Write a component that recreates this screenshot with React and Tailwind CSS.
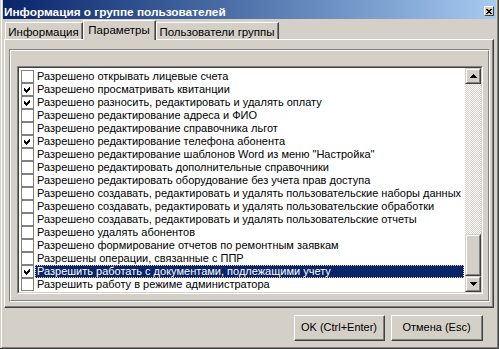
import React from "react";

const items = [
  ["Разрешено открывать лицевые счета", false],
  ["Разрешено просматривать квитанции", true],
  ["Разрешено разносить, редактировать и удалять оплату", true],
  ["Разрешено редактирование адреса и ФИО", false],
  ["Разрешено редактирование справочника льгот", false],
  ["Разрешено редактирование телефона абонента", true],
  ["Разрешено редактирование шаблонов Word из меню \"Настройка\"", false],
  ["Разрешено редактировать дополнительные справочники", false],
  ["Разрешено редактировать оборудование без учета прав доступа", false],
  ["Разрешено создавать, редактировать и удалять пользовательские наборы данных", false],
  ["Разрешено создавать, редактировать и удалять пользовательские обработки", false],
  ["Разрешено создавать, редактировать и удалять пользовательские отчеты", false],
  ["Разрешено удалять абонентов", false],
  ["Разрешено формирование отчетов по ремонтным заявкам", false],
  ["Разрешены операции, связанные с ППР", false],
  ["Разрешить работать с документами, подлежащими учету", true],
  ["Разрешить работу в режиме администратора", false],
];

const SELECTED = 15;

const Check = ({ on }) => (
  <span className="w-[13px] h-[13px] shrink-0 border border-[#808080] bg-white flex items-center justify-center">
    {on && (
      <svg width="7" height="7" viewBox="0 0 7 7" shapeRendering="crispEdges">
        <path d="M0 2L2 4L6 0V3L2 7L0 5Z" fill="#000" />
      </svg>
    )}
  </span>
);

// classic 3d scroll button / thumb
const Raised = ({ className = "", children }) => (
  <div className={`border-t border-l border-[#d4d0c8] border-r-[#404040] border-b-[#404040] border-r border-b ${className}`}>
    <div className="w-full h-full border-t border-l border-white border-r border-b border-r-[#808080] border-b-[#808080] bg-[#d4d0c8] flex items-center justify-center">
      {children}
    </div>
  </div>
);

const Arrow = ({ down }) => (
  <svg width="7" height="4" viewBox="0 0 7 4" shapeRendering="crispEdges">
    <polygon points={down ? "0,0 7,0 3.5,4" : "3.5,0 7,4 0,4"} fill="#000" />
  </svg>
);

const Button = ({ w, children }) => (
  <div className={`${w} h-[26px] border-t border-l border-white border-r border-b border-r-[#404040] border-b-[#404040]`}>
    <div className="w-full h-full border-r border-b border-[#808080] border-t-0 border-l-0 flex items-center justify-center text-[11px] text-black">
      {children}
    </div>
  </div>
);

const Tab = ({ w, active, children }) => (
  <div
    className={`${w} ${active ? "h-[20px] -mb-[1px] relative z-10" : "h-[17px]"} border-t border-l border-white border-r border-r-[#404040] bg-[#d4d0c8]`}
  >
    <div className="h-full border-r border-[#808080] border-t-0 border-l-0 border-b-0 flex justify-center pt-[4px] text-[11.5px] leading-[11px] text-black">
      {children}
    </div>
  </div>
);

export default function App() {
  return (
    <div className="w-[499px] h-[349px] bg-[#d4d0c8] pl-[1px] border-r border-b border-[#404040] font-['Liberation_Sans',Arial,sans-serif]">
      <div className="h-full border-l border-white border-r border-b border-r-[#808080] border-b-[#808080] px-[1px] flex flex-col">
        {/* title bar */}
        <div className="h-[19px] shrink-0 flex bg-gradient-to-r from-[#0a246a] to-[#a6caf0]">
          <span className="pl-[1px] mt-[6px] text-[11.8px] leading-[12px] font-bold text-white whitespace-nowrap">
            Информация о группе пользователей
          </span>
          <div className="ml-auto mr-[2px] mt-[6px] w-[10px] h-[10px] border-t border-l border-white border-r border-b border-r-[#404040] border-b-[#404040] bg-[#d4d0c8] flex items-center justify-center">
            <svg width="6" height="5" viewBox="0 0 6 5" shapeRendering="crispEdges">
              <path d="M0 0L6 5M6 0L0 5" stroke="#000" strokeWidth="1.2" />
            </svg>
          </div>
        </div>

        {/* tabs */}
        <div className="mt-[1px] h-[19px] shrink-0 flex items-end pl-[2px]">
          <Tab w="w-[78px]">Информация</Tab>
          <Tab w="w-[73px]" active>Параметры</Tab>
          <Tab w="w-[123px]">Пользователи группы</Tab>
        </div>

        {/* tab page */}
        <div className="ml-[1px] mr-[2px] h-[269px] shrink-0 border-t border-l border-white border-r border-b border-r-[#404040] border-b-[#404040]">
          <div className="h-full border-r border-b border-[#808080] border-t-0 border-l-0 pt-[9px] pl-[4px] pr-[2px] pb-[4px]">
            {/* etched frame */}
            <div className="h-[253px] border-t border-l border-[#808080] border-r border-b border-r-white border-b-white">
              <div className="h-full border-t border-l border-white border-r border-b border-r-[#808080] border-b-[#808080] pt-[15px] pl-[6px] pr-[5px]">
                {/* list box */}
                <div className="h-[228px] border-t border-l border-[#808080] border-r border-b border-r-white border-b-white">
                  <div className="h-full border-t border-l border-[#404040] border-r border-b border-r-[#d4d0c8] border-b-[#d4d0c8] flex bg-white">
                    <div className="flex-1 min-w-0 pt-[2px] overflow-hidden">
                      {items.map(([label, on], i) => (
                        <div key={i} className="h-[13px] flex pl-[2px] pr-[1px]">
                          <Check on={on} />
                          <div
                            className={`ml-[1px] flex-1 min-w-0 h-[13px] pl-[1px] border text-[11px] leading-[11px] whitespace-nowrap overflow-hidden ${
                              i === SELECTED
                                ? "bg-[#0a246a] text-white border-dotted border-[#e8d47a]"
                                : "border-transparent text-black"
                            }`}
                          >
                            {label}
                          </div>
                        </div>
                      ))}
                    </div>
                    {/* scrollbar */}
                    <div className="w-[16px] shrink-0 flex flex-col">
                      <Raised className="h-[16px] shrink-0">
                        <Arrow />
                      </Raised>
                      <div className="flex-1 bg-[repeating-conic-gradient(#ffffff_0_25%,#d4d0c8_0_50%)] bg-size-[2px_2px]" />
                      <Raised className="h-[42px] shrink-0" />
                      <Raised className="h-[16px] shrink-0">
                        <Arrow down />
                      </Raised>
                    </div>
                  </div>
                </div>
              </div>
            </div>
          </div>
        </div>

        {/* buttons */}
        <div className="mt-[7px] flex justify-end gap-[6px] pr-[13px]">
          <Button w="w-[91px]">OK (Ctrl+Enter)</Button>
          <Button w="w-[92px]">Отмена (Esc)</Button>
        </div>
      </div>
    </div>
  );
}
